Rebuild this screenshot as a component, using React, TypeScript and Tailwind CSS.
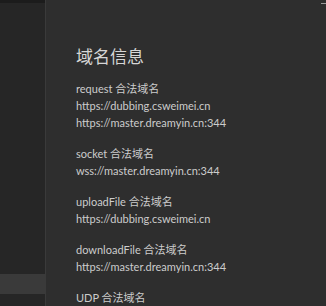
import React from 'react'

const GROUPS = [
  { label: 'request 合法域名', urls: ['https://dubbing.csweimei.cn', 'https://master.dreamyin.cn:344'] },
  { label: 'socket 合法域名', urls: ['wss://master.dreamyin.cn:344'] },
  { label: 'uploadFile 合法域名', urls: ['https://dubbing.csweimei.cn'] },
  { label: 'downloadFile 合法域名', urls: ['https://master.dreamyin.cn:344'] },
  { label: 'UDP 合法域名', urls: [] as string[] },
]

export default function App() {
  return (
    <div
      className="flex w-[326px] h-[306px] overflow-hidden bg-[#2e2e2e] text-[#cccccc]"
      style={{ fontFamily: 'Lato, "Noto Sans CJK SC", sans-serif' }}
    >
      {/* sidebar */}
      <div className="w-[46px] flex-shrink-0 flex flex-col bg-[#262626] border-r border-[#3a3a3a]">
        <div className="h-[3px] bg-[#1c1c1c]" />
        <div className="h-[271px]" />
        <div className="h-[20px] bg-[#3a3a3a]" />
        <div className="flex-1" />
      </div>

      {/* content */}
      <div className="relative flex-1 pl-[30px] pt-[45px]">
        <div className="absolute right-0 top-[3px] w-[5px] h-px bg-[#9a9a9a]" />
        <h2 className="text-[17px] leading-[24px] text-[#d6d6d6] mb-[11px]">域名信息</h2>
        <div className="flex flex-col gap-[14px]">
          {GROUPS.map(g => (
            <div key={g.label} className="text-[11px] leading-[17px]">
              <div className="whitespace-nowrap">{g.label}</div>
              {g.urls.map(u => (
                <div key={u} className="whitespace-nowrap">{u}</div>
              ))}
            </div>
          ))}
        </div>
      </div>
    </div>
  )
}
